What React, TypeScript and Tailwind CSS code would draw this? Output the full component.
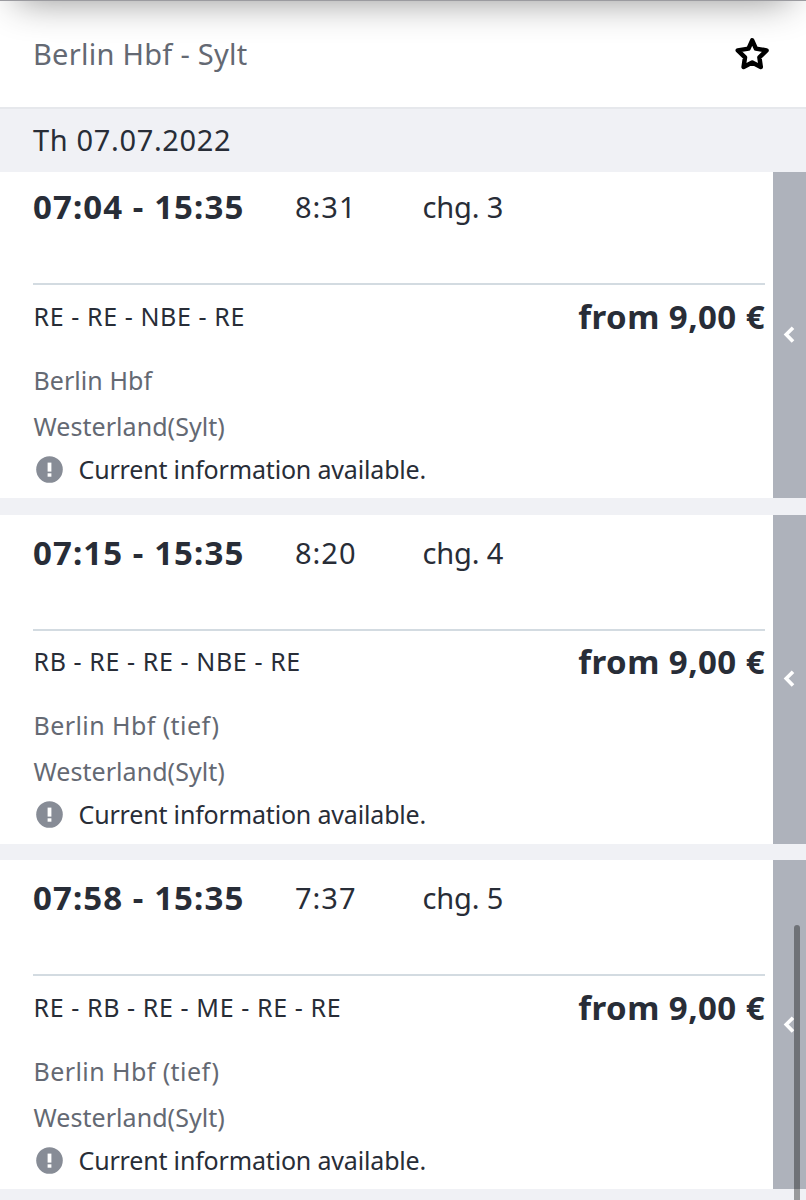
import clsx from 'clsx';

type Trip = {
  departure: string;
  arrival: string;
  duration: string;
  changes: number;
  products: string;
  from: string;
  fromTracking: string;
  cardClass: string;
};

const trips: Trip[] = [
  {
    departure: '07:04',
    arrival: '15:35',
    duration: '8:31',
    changes: 3,
    products: 'RE - RE - NBE - RE',
    from: 'Berlin Hbf',
    fromTracking: 'tracking-[0.05px]',
    cardClass: 'h-[326px] pt-[14px]',
  },
  {
    departure: '07:15',
    arrival: '15:35',
    duration: '8:20',
    changes: 4,
    products: 'RB - RE - RE - NBE - RE',
    from: 'Berlin Hbf (tief)',
    fromTracking: 'tracking-[0.42px]',
    cardClass: 'h-[329px] pt-[17px]',
  },
  {
    departure: '07:58',
    arrival: '15:35',
    duration: '7:37',
    changes: 5,
    products: 'RE - RB - RE - ME - RE - RE',
    from: 'Berlin Hbf (tief)',
    fromTracking: 'tracking-[0.42px]',
    cardClass: 'h-[329px] pt-[17px]',
  },
];

function StarIcon() {
  return (
    <svg className="h-9 w-9" viewBox="0 0 36 36" fill="none">
      <path
        d="M18.2 4.3 L21.9 12.6 L32.6 14.4 L25.4 21.4 L26.8 31 L18.2 26.6 L9.6 31 L11 21.4 L3.8 14.4 L14.5 12.6 Z"
        stroke="#000"
        strokeWidth="4.5"
        strokeLinejoin="round"
      />
    </svg>
  );
}

function NoticeIcon() {
  return (
    <svg className="h-[27px] w-[27px] shrink-0" viewBox="0 0 27 27">
      <circle cx="13.5" cy="13.5" r="13.3" fill="#878c96" />
      <rect x="11.6" y="6.6" width="3.8" height="9" fill="#fff" />
      <rect x="11.6" y="17.3" width="3.8" height="3.4" fill="#fff" />
    </svg>
  );
}

function Chevron() {
  return (
    <svg className="mr-[2px] h-[18px] w-[12px]" viewBox="0 0 12 18" fill="none">
      <path d="M10 1.8 L3.2 8.6 L10 15.6" stroke="#fff" strokeWidth="3.6" />
    </svg>
  );
}

function TripCard({ trip }: { trip: Trip }) {
  return (
    <article className="flex bg-white">
      <div className={clsx('w-[773px] pl-[33px] pr-[8px] leading-none whitespace-nowrap', trip.cardClass)}>
        <div className="flex h-[41px] items-center text-[29px]">
          <strong className="w-[262px] text-[33px] font-bold tracking-[1.08px]">
            {trip.departure} - {trip.arrival}
          </strong>
          <span className="w-[127.5px] tracking-[1px]">{trip.duration}</span>
          <span className="tracking-[-0.15px]">chg. {trip.changes}</span>
        </div>
        <div className="mt-[56px] h-[2px] bg-[#d3dbe1]" />
        <div className="flex h-[62px] items-center justify-between">
          <span className="pl-[0.5px] text-[25px] tracking-[0.6px]">{trip.products}</span>
          <strong className="text-[33px] font-bold tracking-[0.45px]">from 9,00 €</strong>
        </div>
        <div className="mt-[10px] pl-[0.5px] text-[25px] text-[#646973]">
          <p className={clsx('flex h-[46px] items-center', trip.fromTracking)}>{trip.from}</p>
          <p className="flex h-[46px] items-center tracking-[0.05px]">Westerland(Sylt)</p>
        </div>
        <div className="flex h-[40px] items-center gap-[15.5px] pl-[3px] text-[25px] tracking-[-0.17px]">
          <NoticeIcon />
          <span>Current information available.</span>
        </div>
      </div>
      <div className="flex w-[33px] items-center justify-center bg-[#aeb2bb]">
        <Chevron />
      </div>
    </article>
  );
}

export default function App() {
  return (
    <main className="relative h-[1200px] w-[806px] overflow-hidden bg-[#f0f1f5] font-['Noto_Sans',sans-serif] text-[#282d37]">
      <header className="relative flex h-[107px] items-center justify-between overflow-hidden bg-white pl-[33px] pr-[36px] leading-none">
        <div className="absolute -top-[100px] right-[16px] left-[16px] h-[100px] shadow-[0_0_38px_rgba(0,0,0,0.46)]" />
        <div className="absolute top-0 right-0 left-0 h-px bg-[#9b9ba0]" />
        <h1 className="text-[29px] tracking-[0.27px] text-[#646973]">Berlin Hbf - Sylt</h1>
        <StarIcon />
      </header>
      <div className="flex h-[65px] items-center border-t-2 border-[#e6e8ec] pb-[2px] pl-[33px] text-[29px] leading-none tracking-[0.65px]">
        Th 07.07.2022
      </div>
      <div className="flex flex-col gap-[16.5px]">
        {trips.map((trip) => (
          <TripCard key={trip.departure} trip={trip} />
        ))}
      </div>
      <div className="absolute top-[925px] right-[6px] h-[300px] w-[6.5px] rounded-full bg-black/36" />
    </main>
  );
}
